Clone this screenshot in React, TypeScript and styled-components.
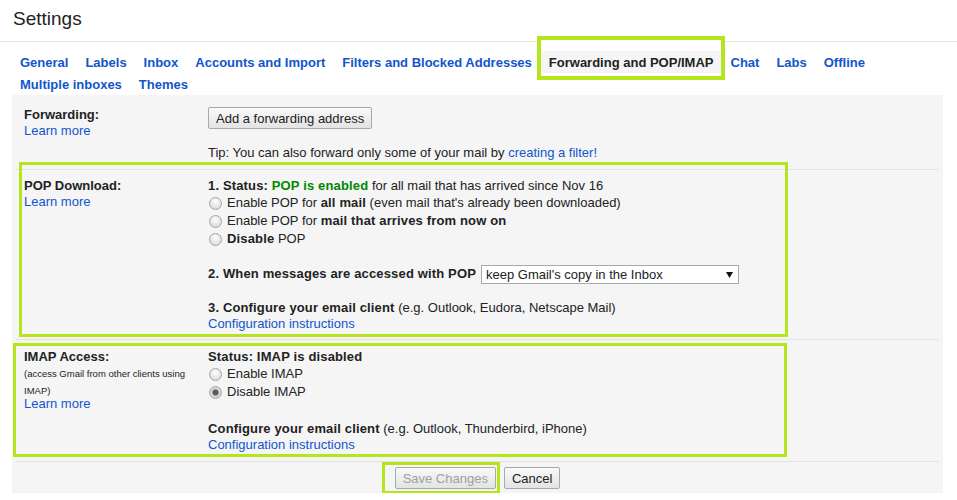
import styled, { createGlobalStyle } from "styled-components";

const GlobalStyle = createGlobalStyle`
  body {
    margin: 0;
    background: #fff;
    font-family: "Liberation Sans", Arial, sans-serif;
    font-size: 13px;
    color: #222;
  }
`

const Header = styled.div`
  box-sizing: border-box;
  height: 42px;
  padding: 9px 0 0 13px;
  border-bottom: 1px solid #e5e5e5;
`

const Title = styled.h1`
  margin: 0;
  font-size: 19px;
  font-weight: normal;
  line-height: 19px;
  color: #222;
`

const Tabs = styled.ul`
  display: flex;
  flex-wrap: wrap;
  list-style: none;
  margin: 0;
  padding: 9px 13px 0;
`

const TabItem = styled.li`
  position: relative;
  z-index: 0;
  margin-right: 3px;
`

const TabLink = styled.a<{ $active?: boolean }>`
  display: block;
  height: 22px;
  line-height: 23px;
  padding: 0 7px;
  font-weight: bold;
  text-decoration: none;
  white-space: nowrap;
  color: ${p => p.$active ? '#222' : '#15c'};
  background: ${p => p.$active ? '#f5f5f5' : 'transparent'};
  cursor: pointer;
`

// lime boxes drawn over the screenshot
const Highlight = styled.span<{ $inset: string; $width?: number; $fill?: boolean }>`
  position: absolute;
  inset: ${p => p.$inset};
  border: ${p => p.$width || 3}px solid #b5e61d;
  background: ${p => p.$fill ? '#fff' : 'transparent'};
  z-index: ${p => p.$fill ? -1 : 1};
  pointer-events: none;
`

const Panel = styled.div`
  background: #f5f5f5;
  margin: 0 14px 0 12px;
  padding: 0 4px;
`

const Row = styled.div<{ $pad: string; $first?: boolean }>`
  position: relative;
  display: grid;
  grid-template-columns: 192px 1fr;
  padding: ${p => p.$pad};
  border-top: ${p => p.$first ? 'none' : '1px solid #e2e2e2'};
`

const LabelCell = styled.div`
  padding: 0 8px;
`

const LabelTitle = styled.div`
  font-weight: bold;
  line-height: 16px;
`

const LearnMore = styled.a`
  display: block;
  color: #15c;
  text-decoration: none;
  line-height: 16px;
  cursor: pointer;
`

const SmallNote = styled.div`
  font-size: 9.5px;
  line-height: 17px;
  margin-bottom: -3px;
`

const ValueCell = styled.div`
  display: flex;
  flex-direction: column;
  align-items: flex-start;
  b {
    letter-spacing: 0.15px;
  }
`

const Line = styled.div<{ $gap?: number }>`
  line-height: 16px;
  margin-top: ${p => p.$gap || 0}px;
`

const Link = styled.a`
  color: #15c;
  text-decoration: none;
  cursor: pointer;
`

const Enabled = styled.b`
  color: #080;
`

const RadioLine = styled.label`
  display: flex;
  align-items: center;
  height: 18px;
  line-height: 18px;
`

const Radio = styled.input.attrs({ type: 'radio' })`
  appearance: none;
  box-sizing: border-box;
  width: 13px;
  height: 13px;
  margin: 0 5px 0 1px;
  border: 1px solid #a4a4a4;
  border-radius: 50%;
  background: radial-gradient(circle at 50% 35%, #fefefe 0, #e6e6e6 55%, #d2d2d2 100%);
  &:checked {
    background: radial-gradient(circle, #5a5a5a 0 2.5px, #cfcfcf 3.5px, #e8e8e8 100%);
  }
`

const SelectLine = styled.div`
  display: flex;
  align-items: center;
  gap: 5px;
  height: 20px;
  line-height: 20px;
  margin-top: 16px;
`

const SelectWrap = styled.span`
  position: relative;
  display: inline-block;
`

const Select = styled.select`
  appearance: none;
  box-sizing: border-box;
  width: 258px;
  height: 19px;
  padding: 0 0 0 4px;
  border: 1px solid #a9a9a9;
  border-radius: 0;
  background: #fff;
  color: #222;
  font-family: "Liberation Sans", Arial, sans-serif;
  font-size: 13px;
  display: block;
`

const Caret = styled.svg`
  position: absolute;
  right: 6px;
  top: 7px;
  pointer-events: none;
`

const Button = styled.button`
  box-sizing: border-box;
  height: 22px;
  padding: 0 7px;
  border: 1px solid #a9a9a9;
  border-radius: 2px;
  background: linear-gradient(#f9f9f9, #e3e3e3);
  color: #222;
  font-family: "Liberation Sans", Arial, sans-serif;
  font-size: 13px;
  cursor: pointer;
  &:disabled {
    color: #a0a0a0;
    cursor: default;
  }
`

const Tip = styled.div`
  line-height: 16px;
  margin-top: 16px;
`

const ButtonBar = styled.div`
  display: flex;
  justify-content: center;
  gap: 8px;
  padding: 5px 0 4px;
  border-top: 1px solid #e2e2e2;
`

const ButtonWrap = styled.span`
  position: relative;
  display: inline-block;
`

const tabs = [
  'General', 'Labels', 'Inbox', 'Accounts and Import', 'Filters and Blocked Addresses',
  'Forwarding and POP/IMAP', 'Chat', 'Labs', 'Offline', 'Multiple inboxes', 'Themes'
];

const ACTIVE_TAB = 'Forwarding and POP/IMAP';

const App = () => {
  return (
    <>
      <GlobalStyle />
      <Header>
        <Title>Settings</Title>
      </Header>
      <Tabs>
        {tabs.map((t) => (
          <TabItem key={t}>
            {t === ACTIVE_TAB && <Highlight $inset="-15px -4px -7px -5px" $width={4} $fill />}
            <TabLink $active={t === ACTIVE_TAB}>{t}</TabLink>
          </TabItem>
        ))}
      </Tabs>
      <Panel>
        <Row $pad="12px 0 8px" $first>
          <LabelCell>
            <LabelTitle>Forwarding:</LabelTitle>
            <LearnMore>Learn more</LearnMore>
          </LabelCell>
          <ValueCell>
            <Button>Add a forwarding address</Button>
            <Tip>Tip: You can also forward only some of your mail by <Link>creating a filter!</Link></Tip>
          </ValueCell>
        </Row>

        <Row $pad="8px 0 7px">
          <Highlight $inset="-8px 151px 2px 3px" />
          <LabelCell>
            <LabelTitle>POP Download:</LabelTitle>
            <LearnMore>Learn more</LearnMore>
          </LabelCell>
          <ValueCell>
            <Line><b>1. Status: </b><Enabled>POP is enabled</Enabled> for all mail that has arrived since Nov 16</Line>
            <RadioLine><Radio name="pop" />Enable POP for&nbsp;<b>all mail</b>&nbsp;(even mail that's already been downloaded)</RadioLine>
            <RadioLine><Radio name="pop" />Enable POP for&nbsp;<b>mail that arrives from now on</b></RadioLine>
            <RadioLine><Radio name="pop" /><b>Disable</b>&nbsp;POP</RadioLine>
            <SelectLine>
              <b>2. When messages are accessed with POP</b>
              <SelectWrap>
                <Select defaultValue="keep">
                  <option value="keep">keep Gmail's copy in the Inbox</option>
                  <option value="read">mark Gmail's copy as read</option>
                  <option value="archive">archive Gmail's copy</option>
                  <option value="delete">delete Gmail's copy</option>
                </Select>
                <Caret width="7" height="6" viewBox="0 0 7 6">
                  <path d="M0 0h7L3.5 6z" fill="#111" />
                </Caret>
              </SelectWrap>
            </SelectLine>
            <Line $gap={16}><b>3. Configure your email client</b> (e.g. Outlook, Eudora, Netscape Mail)</Line>
            <Line><Link>Configuration instructions</Link></Line>
          </ValueCell>
        </Row>

        <Row $pad="9px 0 8px">
          <Highlight $inset="3px 152px 4px -3px" />
          <LabelCell>
            <LabelTitle>IMAP Access:</LabelTitle>
            <SmallNote>(access Gmail from other clients using IMAP)</SmallNote>
            <LearnMore>Learn more</LearnMore>
          </LabelCell>
          <ValueCell>
            <Line><b>Status: IMAP is disabled</b></Line>
            <RadioLine><Radio name="imap" />Enable IMAP</RadioLine>
            <RadioLine><Radio name="imap" defaultChecked />Disable IMAP</RadioLine>
            <Line $gap={20}><b>Configure your email client</b> (e.g. Outlook, Thunderbird, iPhone)</Line>
            <Line><Link>Configuration instructions</Link></Line>
          </ValueCell>
        </Row>

        <ButtonBar>
          <ButtonWrap>
            <Highlight $inset="-5px -4px -5px -13px" />
            <Button disabled>Save Changes</Button>
          </ButtonWrap>
          <Button>Cancel</Button>
        </ButtonBar>
      </Panel>
    </>
  )
}

export default App;
